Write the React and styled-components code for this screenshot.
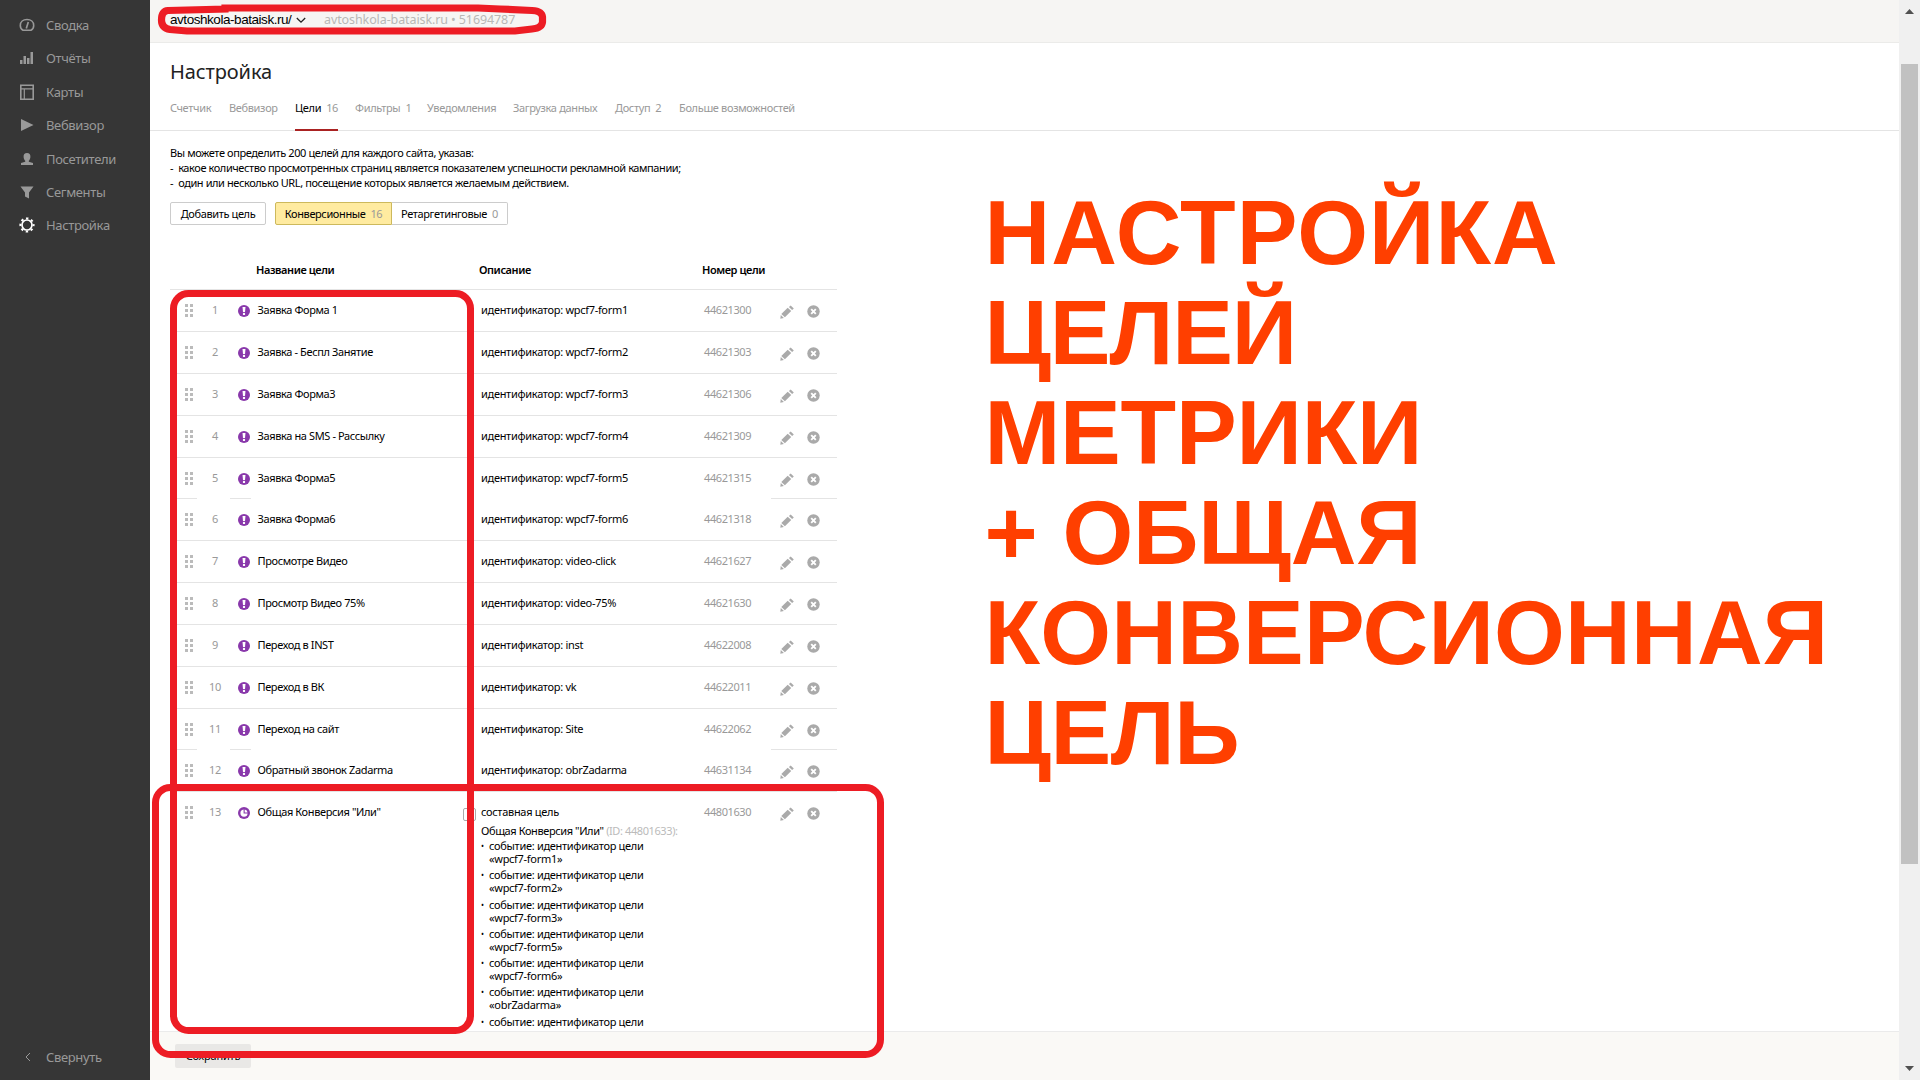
import React from 'react';
import styled, { createGlobalStyle } from 'styled-components';

//* icons
const sidebarIcons = {
    gauge: <svg width="16" height="16" viewBox="0 0 16 16"><path d="M4 13.300C2.200 12.300 1.300 10.500 1.300 8.400 1.300 4.800 4.200 2.500 8 2.500s6.700 2.300 6.700 5.900c0 2.100-.9 3.900-2.700 4.900z" fill="none" stroke="currentColor" strokeWidth="1.600" /><path d="M7.300 11.500L9.300 5" stroke="currentColor" strokeWidth="1.700" /></svg>,
    bars: <svg width="16" height="16" viewBox="0 0 16 16" fill="currentColor"><path d="M1 10h2.500v4H1zM4.500 6H7v8H4.500zM8 8h2.500v6H8zM11.500 2H14v12h-2.500z" /></svg>,
    map: <svg width="16" height="18" viewBox="0 0 16 18" fill="none" stroke="currentColor"><path d="M1.800 2.300h12.400v13.900H1.800z" strokeWidth="1.600" /><path d="M2 5.800h12M5.300 5.800V16" strokeWidth="1.200" /></svg>,
    play: <svg width="16" height="16" viewBox="0 0 16 16" fill="currentColor"><path d="M2 2l12.500 6L2 14z" /></svg>,
    user: <svg width="16" height="16" viewBox="0 0 16 16" fill="currentColor"><path d="M8 2c2.400 0 3.600 1.600 3.400 4C11.300 8 10.500 9 9.800 9.800v1l4.200 1.200v2H2v-2l4.200-1.200v-1C5.500 9 4.700 8 4.600 6 4.400 3.600 5.600 2 8 2z" /></svg>,
    funnel: <svg width="16" height="16" viewBox="0 0 16 16" fill="currentColor"><path d="M1.500 2.500h13L10 8.500v6l-4-2v-4z" /></svg>,
    gear: <svg width="16" height="16" viewBox="0 0 16 16" fill="none" stroke="#fff"><circle cx="8" cy="8" r="5" strokeWidth="1.700" /><circle cx="8" cy="8" r="6.600" strokeWidth="2" strokeDasharray="2.400 2.784" strokeDashoffset="1.200" /></svg>,
};

const menu = [
    ['gauge', 'Сводка'],
    ['bars', 'Отчёты'],
    ['map', 'Карты'],
    ['play', 'Вебвизор'],
    ['user', 'Посетители'],
    ['funnel', 'Сегменты'],
    ['gear', 'Настройка'],
];

const tabs = [
    { title: 'Счетчик', width: 59 },
    { title: 'Вебвизор', width: 66 },
    { title: 'Цели', count: 16, active: true, width: 60 },
    { title: 'Фильтры', count: 1, width: 72 },
    { title: 'Уведомления', width: 86 },
    { title: 'Загрузка данных', width: 102 },
    { title: 'Доступ', count: 2, width: 64 },
    { title: 'Больше возможностей', width: 120 },
];

const goals = [
    ['Заявка Форма 1', 'wpcf7-form1', 44621300],
    ['Заявка - Беспл Занятие', 'wpcf7-form2', 44621303],
    ['Заявка Форма3', 'wpcf7-form3', 44621306],
    ['Заявка на SMS - Рассылку', 'wpcf7-form4', 44621309],
    ['Заявка Форма5', 'wpcf7-form5', 44621315],
    ['Заявка Форма6', 'wpcf7-form6', 44621318],
    ['Просмотре Видео', 'video-click', 44621627],
    ['Просмотр Видео 75%', 'video-75%', 44621630],
    ['Переход в INST', 'inst', 44622008],
    ['Переход в ВК', 'vk', 44622011],
    ['Переход на сайт', 'Site', 44622062],
    ['Обратный звонок Zadarma', 'obrZadarma', 44631134],
];

const steps = ['wpcf7-form1', 'wpcf7-form2', 'wpcf7-form3', 'wpcf7-form5', 'wpcf7-form6', 'obrZadarma', ''];

// line and its tracking
const caption = [
    ['НАСТРОЙКА', 1],
    ['ЦЕЛЕЙ', -1.1],
    ['МЕТРИКИ', -0.2],
    ['+ ОБЩАЯ', -0.2],
    ['КОНВЕРСИОННАЯ', 0.2],
    ['ЦЕЛЬ', -0.4],
];

// ** styled component */
const GlobalStyle = createGlobalStyle`
  body {
    margin: 0;
    overflow: hidden;
    background: #fff;
    color: #000;
    font-family: 'Noto Sans', sans-serif;
  }
  * { box-sizing: border-box; }
`
const Page = styled.div`
  position: relative;
  display: flex;
  width: 1920px;
  height: 1080px;
  overflow: hidden;
`
const Sidebar = styled.nav`
  display: flex;
  flex-direction: column;
  width: 150px;
  padding-top: 8.400px;
  background: #363636;
  color: #999;
  font-size: 13px;
  letter-spacing: -0.35px;
`
const MenuItem = styled.a`
  display: flex;
  align-items: center;
  height: 33.4px;
  padding-left: 19px;
  gap: 11px;
  svg { display: block; width: 16px; }
`
const Collapse = styled(MenuItem)`
  margin-top: auto;
  margin-bottom: 6px;
`
const Main = styled.main`
  display: flex;
  flex-direction: column;
  width: 1749px;
`
const TopBar = styled.header`
  display: flex;
  flex: none;
  height: 43px;
  padding: 11px 0 0 20px;
  border-bottom: 1px solid #ebebe9;
  background: #f6f5f3;
  line-height: 18px;
`
const Site = styled.div`
  display: flex;
  align-items: center;
  width: 154px;
  height: 18px;
  gap: 5px;
  font: 13.500px/18px 'Liberation Sans', Arial, sans-serif;
  letter-spacing: -0.45px;
`
const SiteInfo = styled.div`
  color: #b8b8b6;
  font-size: 12.500px;
  letter-spacing: -0.1px;
`
const Title = styled.h1`
  flex: none;
  margin: 13px 0 0 20px;
  height: 32px;
  font-size: 20px;
  font-weight: 400;
  line-height: 31px;
  letter-spacing: -0.1px;
  color: #222;
`
const Tabs = styled.div`
  display: flex;
  flex: none;
  height: 43px;
  padding-left: 20px;
  border-bottom: 1px solid #e4e4e4;
  font-size: 11px;
  line-height: 16px;
  letter-spacing: -0.34px;
  white-space: nowrap;
`
const TabCell = styled.div`
  width: ${({ $width }) => $width}px;
`
const Tab = styled.div`
  display: inline-block;
  height: 43px;
  padding-top: 12px;
  color: ${({ $active }) => ($active ? '#000' : '#999')};
  border-bottom: ${({ $active }) => ($active ? '2px solid #aa2222' : '0')};
`
const Count = styled.span`
  margin-left: 5px;
  color: #999;
`
const Body = styled.div`
  display: flex;
  flex: none;
  height: 900px;
  overflow: hidden;
`
const Content = styled.section`
  width: 667px;
  margin-left: 20px;
  font-size: 11px;
  letter-spacing: -0.3px;
`
const Intro = styled.div`
  margin-top: 14px;
  line-height: 15px;
  letter-spacing: -0.41px;
  white-space: nowrap;
`
const IntroItem = styled.div`
  display: flex;
  gap: 5px;
`
const Toolbar = styled.div`
  display: flex;
  gap: 9px;
  margin-top: 12px;
`
const Button = styled.button`
  width: ${({ $width }) => $width}px;
  height: 23px;
  padding: 1px 0 0;
  border: 1px solid ${({ $selected }) => ($selected ? '#cdb95c' : '#ccc')};
  border-radius: ${({ $radius }) => $radius || '2px'};
  background: ${({ $selected }) => ($selected ? '#ffeba0' : '#fff')};
  color: #000;
  font: 11px/20px 'Noto Sans', sans-serif;
  letter-spacing: -0.38px;
  white-space: nowrap;
`
const Segments = styled.div`
  display: flex;
  button + button { border-left: 0; }
`
const Row = styled.div`
  display: grid;
  grid-template-columns: 35px 20px 31px 225px 223px 76px 27px 1fr;
  align-items: start;
  height: ${({ $short }) => ($short ? 41 : 42)}px;
  padding-top: 12px;
  border-bottom: 1px solid transparent;
  border-image: ${({ $short }) => ($short
        ? 'linear-gradient(90deg, #e4e4e4 28px, transparent 28px 61px, #e4e4e4 61px 82px, transparent 82px 600px, #e4e4e4 600px) 1'
        : 'linear-gradient(#e4e4e4, #e4e4e4) 1')};
  line-height: 16px;
  white-space: nowrap;
`
const HeadRow = styled.div`
  display: grid;
  grid-template-columns: 86px 223px 223px 1fr;
  align-items: center;
  height: 40px;
  margin-top: 25px;
  border-bottom: 1px solid #e4e4e4;
  font-weight: 600;
  letter-spacing: -0.42px;
`
const DragCell = styled.div`
  padding: 2px 0 0 15px;
  svg { display: block; }
`
const Num = styled.div`
  color: #999;
  text-align: center;
`
const TypeCell = styled.div`
  padding: 2.500px 0 0 12.500px;
  svg { display: block; }
`
const Name = styled.div`
  padding-left: 1.500px;
  letter-spacing: -0.38px;
`
const GoalId = styled.div`
  color: #999;
  letter-spacing: -0.4px;
`
const Action = styled.div`
  padding-top: 2.500px;
  color: #aaa;
  svg { display: block; }
`
const LastRow = styled(Row)`
  height: 300px;
  border-image: none;
  border: 0;
`
const Description = styled.div`
  position: relative;
`
const Expander = styled.span`
  position: absolute;
  left: -18px;
  top: 4px;
  width: 13px;
  height: 13px;
  border: 1px solid #aaa;
  border-radius: 2px;
  &::after {
    content: '';
    position: absolute;
    left: 3px;
    top: 5px;
    width: 5px;
    height: 1px;
    background: #aaa;
  }
`
const GroupTitle = styled.div`
  margin-top: 3px;
  letter-spacing: -0.4px;
  span { color: #bbb; }
`
const Step = styled.div`
  display: flex;
  height: 29.300px;
  line-height: 13px;
  &::before { content: '•'; width: 8px; font-size: 8px; }
`
const Caption = styled.div`
  margin: 52px 0 0 147.500px;
  color: #ff3f00;
  font: bold 91px/100px 'Liberation Sans', Arial, sans-serif;
  white-space: nowrap;
`
const CaptionLine = styled.div`
  letter-spacing: ${({ $tracking }) => $tracking}px;
`
const Footer = styled.footer`
  flex: 1;
  padding: 12px 0 0 25px;
  border-top: 1px solid #ebebeb;
  background: #faf9f6;
`
const SaveButton = styled.button`
  display: block;
  width: 76px;
  height: 24px;
  padding: 0;
  border: 0;
  border-radius: 2px;
  background: #e9e8e6;
  color: #000;
  font: 11px/20px 'Noto Sans', sans-serif;
  letter-spacing: -0.2px;
`
const Scrollbar = styled.div`
  display: flex;
  flex-direction: column;
  align-items: center;
  width: 21px;
  padding: 9px 0;
  background: #f0f0f0;
`
const Arrow = styled.svg`
  display: block;
  width: 9px;
  height: 5px;
`
const Thumb = styled.div`
  width: 17px;
  height: 800px;
  margin: 50px 0 auto;
  background: #c1c1c1;
`
const Marks = styled.svg`
  position: absolute;
  inset: 0;
  pointer-events: none;
`

const DragIcon = () => (
    <svg width="9" height="13" fill="#bbb">
        {[0, 5, 10].map((y) => <path key={y} d={`M0 ${y}h3v3h-3zM5 ${y}h3v3h-3z`} />)}
    </svg>
);

const EventIcon = () => (
    <svg width="12" height="12" viewBox="0 0 12 12">
        <circle cx="6" cy="6" r="6" fill="#8938ab" />
        <path d="M4.500 2h3L7 7H5z" fill="#fff" />
        <circle cx="6" cy="8.900" r="1.200" fill="#fff" />
    </svg>
);

const CompositeIcon = () => (
    <svg width="12" height="12" viewBox="0 0 12 12">
        <circle cx="6" cy="6" r="6" fill="#8938ab" />
        <path d="M5.600 2.500A3.600 3.600 0 1 0 9.600 6.400H5.600z" fill="#fff" />
        <path d="M6.700 2.400a3.300 3.300 0 0 1 2.900 3H6.700z" fill="#fff" />
    </svg>
);

const Actions = () => (
    <>
        <Action>
            <svg width="14" height="14" viewBox="0 0 14 14" fill="currentColor">
                <path d="M7.700 2.800l3.500 3.300-6.300 6.200-3.600-3.300zM8.900 1.900L10.700.4l3.100 3-1.700 1.700zM.8 10l3.100 2.900-3.600.8z" />
            </svg>
        </Action>
        <Action>
            <svg width="13" height="13" viewBox="0 0 13 13">
                <circle cx="6.500" cy="6.500" r="6.200" fill="currentColor" />
                <path d="M4.200 4.200l4.600 4.600M8.800 4.200L4.200 8.800" stroke="#fff" strokeWidth="1.900" />
            </svg>
        </Action>
    </>
);

const App = () => {
    return (
        <Page>
            <GlobalStyle />
            <Sidebar>
                {menu.map(([icon, title]) => (
                    <MenuItem key={title}>{sidebarIcons[icon]}{title}</MenuItem>
                ))}
                <Collapse>
                    <svg width="16" height="10" viewBox="0 0 16 10"><path d="M11 1L7 5l4 4" fill="none" stroke="currentColor" /></svg>
                    Свернуть
                </Collapse>
            </Sidebar>
            <Main>
                <TopBar>
                    <Site>
                        avtoshkola-bataisk.ru/
                        <svg width="10" height="7" viewBox="0 0 10 7"><path d="M.8 1l4.200 4.200L9.200 1" fill="none" stroke="#222" strokeWidth="1.300" /></svg>
                    </Site>
                    <SiteInfo>avtoshkola-bataisk.ru • 51694787</SiteInfo>
                </TopBar>
                <Title>Настройка</Title>
                <Tabs>
                    {tabs.map(({ title, count, active, width }) => (
                        <TabCell key={title} $width={width}>
                            <Tab $active={active}>{title}{count && <Count>{count}</Count>}</Tab>
                        </TabCell>
                    ))}
                </Tabs>
                <Body>
                    <Content>
                        <Intro>
                            <div>Вы можете определить 200 целей для каждого сайта, указав:</div>
                            <IntroItem><span>-</span>какое количество просмотренных страниц является показателем успешности рекламной кампании;</IntroItem>
                            <IntroItem><span>-</span>один или несколько URL, посещение которых является желаемым действием.</IntroItem>
                        </Intro>
                        <Toolbar>
                            <Button $width={96}>Добавить цель</Button>
                            <Segments>
                                <Button $width={117} $selected $radius="2px 0 0 2px">Конверсионные<Count>16</Count></Button>
                                <Button $width={116} $radius="0 2px 2px 0">Ретаргетинговые<Count>0</Count></Button>
                            </Segments>
                        </Toolbar>
                        <HeadRow>
                            <div />
                            <div>Название цели</div>
                            <div>Описание</div>
                            <div>Номер цели</div>
                        </HeadRow>
                        {goals.map(([name, target, id], i) => (
                            <Row key={id} $short={i === 4 || i === 10}>
                                <DragCell><DragIcon /></DragCell>
                                <Num>{i + 1}</Num>
                                <TypeCell><EventIcon /></TypeCell>
                                <Name>{name}</Name>
                                <div>идентификатор: {target}</div>
                                <GoalId>{id}</GoalId>
                                <Actions />
                            </Row>
                        ))}
                        <LastRow>
                            <DragCell><DragIcon /></DragCell>
                            <Num>13</Num>
                            <TypeCell><CompositeIcon /></TypeCell>
                            <Name>Общая Конверсия "Или"</Name>
                            <Description>
                                <Expander />
                                составная цель
                                <GroupTitle>Общая Конверсия "Или" <span>(ID: 44801633):</span></GroupTitle>
                                {steps.map((step) => (
                                    <Step key={step}><div>событие: идентификатор цели{step && <><br />«{step}»</>}</div></Step>
                                ))}
                            </Description>
                            <GoalId>44801630</GoalId>
                            <Actions />
                        </LastRow>
                    </Content>
                    <Caption>
                        {caption.map(([line, tracking]) => <CaptionLine key={line} $tracking={tracking}>{line}</CaptionLine>)}
                    </Caption>
                </Body>
                <Footer>
                    <SaveButton>Сохранить</SaveButton>
                </Footer>
            </Main>
            <Scrollbar>
                <Arrow viewBox="0 0 9 5"><path d="M0 5l4.500-5L9 5z" fill="#505050" /></Arrow>
                <Thumb />
                <Arrow viewBox="0 0 9 5"><path d="M0 0h9L4.500 5z" fill="#505050" /></Arrow>
            </Scrollbar>
            <Marks width="1920" height="1080" fill="none" stroke="#ed1c24" strokeWidth="7">
                <path d="M168 10.500L225 9V8H478L500 9L532 10.500Q542 11 542.500 17V22Q542 28 532 29L515 31H187L170 29.500Q161.500 28 161.500 20Q161.500 11 168 10.500Z" strokeWidth="7.200" />
                <rect x="173.500" y="293.500" width="297" height="737" rx="15" />
                <rect x="155.500" y="787.500" width="725" height="267" rx="15" />
            </Marks>
        </Page>
    );
};

export default App;
